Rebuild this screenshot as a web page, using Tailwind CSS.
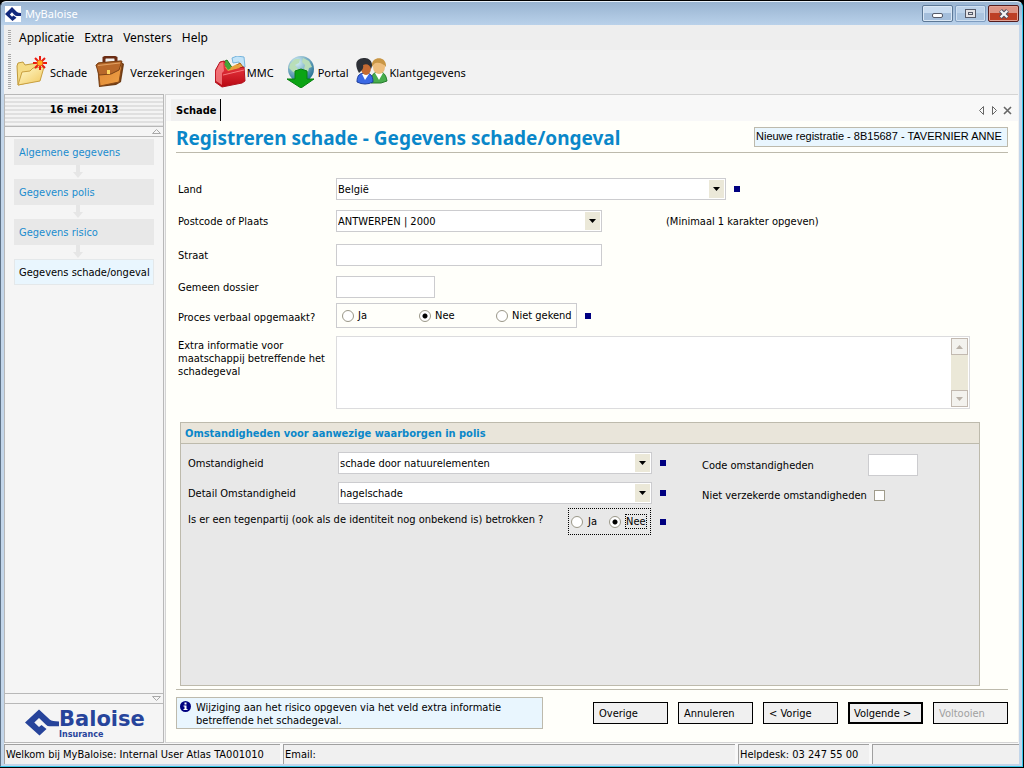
<!DOCTYPE html>
<html lang="nl">
<head>
<meta charset="utf-8">
<title>MyBaloise</title>
<script src="https://cdn.jsdelivr.net/npm/@tailwindcss/browser@4"></script>
</head>
<body class="flex h-screen min-h-[768px] flex-col bg-black pt-px pr-px pb-px font-['DejaVu_Sans_Condensed','DejaVu_Sans',sans-serif] text-[11px] leading-[13px] text-black">
<div class="flex min-h-0 flex-1 flex-col rounded-t-md border border-[#35c6ea] border-t-[#e8f1fa] border-l-[#5f7286] bg-[#c3d6ea] px-[3px] pb-[2px]">

  <header class="-mx-[3px] flex h-[23px] shrink-0 items-center rounded-t-md bg-linear-to-b from-[#99b4d1] to-[#b9d1ea] pr-[3px] pl-1">
    <svg class="size-4 bg-white" viewBox="0 0 16 16" aria-hidden="true"><path d="M0 8 7 1l5 5q1 1 4 1v3h-4q-1.500 0-3-1.500L7 6.300 4.800 8.500 7 10.700l1.500-1.200 3 2.200L7.500 15z" fill="#12287c"/></svg>
    <h1 class="ml-1 flex-1 font-['Noto_Sans',sans-serif] text-[11px] leading-4 text-white">MyBaloise</h1>
    <div class="flex gap-[2px]">
      <button aria-label="Minimaliseren" class="flex h-[17px] w-[31px] items-center justify-center rounded-xs border border-[#5c7896] bg-linear-to-b from-[#c9dcf0] from-50% to-[#a4bedb] to-50% shadow-[inset_0_0_0_1px_#dbe8f5]"><span class="mt-1 h-[5px] w-[11px] rounded-xs border border-[#555a68] bg-white"></span></button>
      <button aria-label="Verkleinen" class="flex h-[17px] w-[31px] items-center justify-center rounded-xs border border-[#7e9cbf] bg-linear-to-b from-[#bdd3ea] from-50% to-[#abc5e0] to-50% shadow-[inset_0_0_0_1px_#cfe0f1]"><span class="flex h-[9px] w-[11px] items-center justify-center border border-[#555a68] bg-[#e3e3e6]"><span class="h-[3px] w-[5px] border border-[#555a68]"></span></span></button>
      <button aria-label="Sluiten" class="flex h-[17px] w-[31px] items-center justify-center rounded-xs border border-[#551c1c] bg-linear-to-b from-[#dd9384] from-50% to-[#bd3f26] to-50% shadow-[inset_0_0_0_1px_#e3a294]"><svg class="h-[10px] w-3" viewBox="0 0 12 10" aria-hidden="true"><path d="M2.500 1.500 9.500 8.500M9.500 1.500 2.500 8.500" stroke="#4b4f61" stroke-width="4.200"/><path d="M2.700 1.700 9.300 8.300M9.300 1.700 2.700 8.300" stroke="#f4f4f6" stroke-width="2.200"/></svg></button>
    </div>
  </header>

  <div class="flex min-h-0 flex-1 flex-col bg-[#f2f2f2]">
    <nav class="flex h-[25px] shrink-0 items-center gap-[10px] bg-[#eeeeee] pt-px pl-1 font-['Noto_Sans',sans-serif] text-xs">
      <span class="-mr-[2px] h-4 w-[3px] bg-[repeating-linear-gradient(to_bottom,#a8a8a8_0_1px,#f4f4f4_1px_2px)]"></span>
      <button>Applicatie</button><button>Extra</button><button>Vensters</button><button>Help</button>
    </nav>

    <div class="flex h-[44px] shrink-0 items-center pl-1 font-['Noto_Sans',sans-serif] text-[11px]">
      <span class="mr-[5px] h-9 w-[3px] bg-[repeating-linear-gradient(to_bottom,#a8a8a8_0_1px,#f4f4f4_1px_2px)]"></span>
      <button class="flex items-center gap-[2px]">
        <svg class="size-8" viewBox="0 0 32 32" aria-hidden="true">
          <defs><linearGradient id="fold" x2="1" y2="1"><stop stop-color="#fffbd0"/><stop offset="1" stop-color="#f1c75c"/></linearGradient></defs>
          <path d="M2 29 1 10l1-3 5-1 2 3 12-2 3 2v15z" fill="#f5dc86" stroke="#c09a3c" stroke-linejoin="round"/>
          <path d="M2 29 6 16l8-1 3-3 11-1-4 14z" fill="url(#fold)" stroke="#c9a040" stroke-linejoin="round"/>
          <path d="M24 0v14M17 7h14M19 2l10 10M29 2 19 12" stroke="#ea1c10" stroke-width="2"/><circle cx="24" cy="7" r="3" fill="#ffad1f" stroke="#f0591a"/>
        </svg>Schade</button>
      <button class="ml-2 flex items-center gap-[3px]">
        <svg class="size-8" viewBox="0 0 32 32" aria-hidden="true">
          <defs><linearGradient id="case" x2="1" y2="1"><stop stop-color="#d98433"/><stop offset="1" stop-color="#f0a045"/></linearGradient></defs>
          <path d="M9 7V2l2-1h8l2 1v4" fill="none" stroke="#6b2c14" stroke-width="3"/>
          <path d="M2 8 25 5l4 3-3 18-5 3-17 2z" fill="#6e3c14"/>
          <path d="M3 11 1 10 3 7l23-2 1 3-3 18-19 4z" fill="url(#case)" stroke="#8a4a18"/>
          <path d="M1 9 4 7l23-2-3 9-8 4-12 1z" fill="#b8682a" stroke="#7d4317"/><rect x="12" y="14" width="3" height="4" fill="#ffd45e"/><path d="M3 9.500 25 7" stroke="#e3a263"/>
        </svg>Verzekeringen</button>
      <button class="ml-[10px] flex items-center">
        <svg class="size-8" viewBox="0 0 32 32" aria-hidden="true">
          <defs><linearGradient id="box" x2="0" y2="1"><stop stop-color="#f2404a"/><stop offset="1" stop-color="#b80812"/></linearGradient></defs>
          <path d="M17 2 22 0l7 1 1 10h-5l-1-5-6 1z" fill="#c3e4f8" stroke="#76b4dc"/>
          <path d="M8 6 12 4l6 9-4 4z" fill="#4bb03a" stroke="#1b7420"/><path d="m14 14 11-7 3 4-7 7z" fill="#eda345" stroke="#a46412"/>
          <path d="M0 15 5 6l4-1 5 9 15-3 1 14-3 2-20 4-7-5z" fill="url(#box)" stroke="#b01420" stroke-linejoin="round"/>
          <path d="M1 15 5 7l3-1 1 9-2 2v12l-6-4z" fill="#f8898c" opacity=".75"/><path d="M8 19 29 14" stroke="#f77b7e"/>
          <path d="m10 11 3 4 12-3-3-4-6 3z" fill="#e8a03c"/><path d="m9 8 3-2 4 6-3 2z" fill="#44a536"/>
        </svg>MMC</button>
      <button class="ml-3 flex items-center">
        <svg class="size-8" viewBox="0 0 32 32" aria-hidden="true">
          <defs><radialGradient id="globe" cx=".35" cy=".25" r=".8"><stop stop-color="#d8f1f8"/><stop offset="1" stop-color="#1f6d92"/></radialGradient></defs>
          <circle cx="15" cy="13" r="13" fill="url(#globe)"/><path d="M4 8 9 3l5 0-1 4-4 2 3 4-2 4-3-1-4-4zM17 2l6 3 3 6-3 1-1 4-4-3 1-4-3-3z" fill="#b9deb8"/>
          <path d="m9 15 6-2 6 2v8h7L15 32 1 23h8z" fill="#0ba414" stroke="#07800e"/>
        </svg>Portal</button>
      <button class="ml-[7px] flex items-center gap-[2px]">
        <svg class="size-8" viewBox="0 0 32 32" aria-hidden="true">
          <path d="M15 25c0-6 3-9 8-9s7 3 8 9l-6 2H15z" fill="#48ad4d" stroke="#257a2b"/><path d="m19 17 4 7 4-7z" fill="#fff"/>
          <ellipse cx="23" cy="11" rx="6" ry="7" fill="#eebd7c"/><path d="M16 11c-2-11 15-12 14 0-2-3-7-5-10-4-2 0-2 2-4 4z" fill="#c99645"/>
          <path d="M1 26c0-7 3-9 8-9s8 2 8 9q-8 4-16 0z" fill="#3a68e4" stroke="#1d3f9d"/><path d="m6 18 3 6 4-6z" fill="#fff"/>
          <ellipse cx="10" cy="12" rx="5" ry="7" fill="#c56a32"/><path d="M3 17C-4 4 4 2 9 2s9 5 6 11c-1-4-4-6-8-4 1 3-1 6-4 8z" fill="#2d3036"/>
        </svg>Klantgegevens</button>
    </div>

    <div class="flex min-h-0 flex-1 gap-px pr-px">
      <aside class="flex w-[160px] shrink-0 flex-col border border-[#b8b8b8] bg-[#f5f5f5]">
        <h2 class="flex h-[31px] items-center justify-center bg-[repeating-linear-gradient(to_bottom,#f4f4f4_0_2px,#e0e0e0_2px_4px)] pb-[2px] font-bold">16 mei 2013</h2>
        <button aria-label="Omhoog" class="flex h-[11px] items-center justify-end border-y border-[#b8b8b8] pr-[2px]"><svg class="h-[5px] w-[9px]" viewBox="0 0 9 5" aria-hidden="true"><path d="M.500 4.500h8L4.500.500z" fill="none" stroke="#a8a8a8"/></svg></button>
        <nav class="flex flex-1 flex-col items-center pt-[2px] text-[#1a8ccf]">
          <a href="#" class="flex h-[26px] w-[140px] items-center bg-[#e8e8e8] px-[5px]">Algemene gegevens</a>
          <svg class="-ml-3 h-[14px] w-[10px] shrink-0" viewBox="0 0 10 14" aria-hidden="true"><path d="M3 0h4v7h3l-5 6-5-6h3z" fill="#e6e6e6"/></svg>
          <a href="#" class="flex h-[26px] w-[140px] items-center bg-[#e8e8e8] px-[5px]">Gegevens polis</a>
          <svg class="-ml-3 h-[14px] w-[10px] shrink-0" viewBox="0 0 10 14" aria-hidden="true"><path d="M3 0h4v7h3l-5 6-5-6h3z" fill="#e6e6e6"/></svg>
          <a href="#" class="flex h-[26px] w-[140px] items-center bg-[#e8e8e8] px-[5px]">Gegevens risico</a>
          <svg class="-ml-3 h-[14px] w-[10px] shrink-0" viewBox="0 0 10 14" aria-hidden="true"><path d="M3 0h4v7h3l-5 6-5-6h3z" fill="#e6e6e6"/></svg>
          <a href="#" class="flex h-[26px] w-[140px] items-center border border-[#e4e8ea] bg-[#e9f6fe] px-1 whitespace-nowrap text-black">Gegevens schade/ongeval</a>
        </nav>
        <button aria-label="Omlaag" class="flex h-[11px] items-center justify-end border-y border-[#b8b8b8] pr-[2px]"><svg class="h-[5px] w-[9px]" viewBox="0 0 9 5" aria-hidden="true"><path d="M.500.500h8l-4 4z" fill="none" stroke="#a8a8a8"/></svg></button>
        <div class="flex h-[38px] items-center pl-5 text-[#27449b]">
          <svg class="h-7 w-[34px] shrink-0" viewBox="0 0 34 28" aria-hidden="true"><path d="M0 13.500 14 .500 25 10.800q2 1.700 9 1.700v4.700h-9.500q-2 0-3.500-1.500l-7-6.700-4.700 4.500 4.700 4.500 2.500-2 5 4-7 6.500z" fill="currentColor"/></svg>
          <div class="flex flex-col font-['DejaVu_Sans',sans-serif] font-bold"><span class="text-[21px] leading-[22px]">Baloise</span><span class="text-[8px] leading-[9px]">Insurance</span></div>
        </div>
      </aside>

      <main class="flex min-w-0 flex-1 flex-col border border-r-0 border-[#d4d4d4] bg-[#fffffa]">
        <div class="flex h-[26px] shrink-0 items-end bg-[#f8f8f8] pr-[6px] pl-[5px]">
          <div role="tab" aria-selected="true" class="flex h-[22px] w-[50px] shrink-0 items-center border-r border-black bg-[#f0f0f0] pl-[5px] font-bold">Schade</div>
          <div class="ml-auto flex h-[22px] items-center gap-1">
            <button aria-label="Vorig tabblad"><svg class="size-[9px]" viewBox="0 0 9 9" aria-hidden="true"><path d="M6.500.500v8l-4-4z" fill="none" stroke="#666"/></svg></button>
            <button aria-label="Volgend tabblad"><svg class="size-[9px]" viewBox="0 0 9 9" aria-hidden="true"><path d="M2.500.500v8l4-4z" fill="none" stroke="#666"/></svg></button>
            <button aria-label="Tabblad sluiten"><svg class="size-[9px]" viewBox="0 0 9 9" aria-hidden="true"><path d="m1 1 7 7M8 1 1 8" stroke="#666" stroke-width="1.600"/></svg></button>
          </div>
        </div>

        <form class="flex min-h-0 flex-1 flex-col px-[10px]" onsubmit="return false">
          <div class="flex h-8 shrink-0 items-center justify-between border-b border-[#bdbaac]">
            <h2 class="pt-[3px] font-['Noto_Sans',sans-serif] text-[19px] leading-6 font-bold text-[#0a87c9]">Registreren schade - Gegevens schade/ongeval</h2>
            <div class="flex h-5 w-[254px] items-center border border-[#bdbaac] bg-[#e9f6fe] pl-px font-['Liberation_Sans',sans-serif] text-[11px] whitespace-nowrap">Nieuwe registratie - 8B15687 - TAVERNIER ANNE</div>
          </div>

          <div class="grid shrink-0 grid-cols-[158px_1fr] pt-[25px] pl-[2px]">
            <label for="land" class="pt-[5px]">Land</label>
            <div class="mb-[10px] flex items-center gap-2">
              <div class="relative w-[390px]"><select id="land" class="block h-[22px] w-full appearance-none border border-[#cccccf] bg-white pl-px"><option>België</option></select><span class="pointer-events-none absolute top-[2px] right-[2px] flex h-[18px] w-[15px] items-center justify-center bg-[#ebe8d8]"><svg class="h-1 w-[7px]" viewBox="0 0 7 4" aria-hidden="true"><path d="M0 0h7L3.500 4z"/></svg></span></div>
              <span class="size-[6px] bg-[#000080]"></span>
            </div>
            <label for="plaats" class="pt-[5px]">Postcode of Plaats</label>
            <div class="mb-3 flex items-center">
              <div class="relative w-[266px]"><select id="plaats" class="block h-[22px] w-full appearance-none border border-[#cccccf] bg-white pl-px"><option>ANTWERPEN | 2000</option></select><span class="pointer-events-none absolute top-[2px] right-[2px] flex h-[18px] w-[15px] items-center justify-center bg-[#ebe8d8]"><svg class="h-1 w-[7px]" viewBox="0 0 7 4" aria-hidden="true"><path d="M0 0h7L3.500 4z"/></svg></span></div>
              <span class="ml-16">(Minimaal 1 karakter opgeven)</span>
            </div>
            <label for="straat" class="pt-[5px]">Straat</label>
            <div class="mb-[10px]"><input id="straat" type="text" class="block h-[22px] w-[266px] border border-[#cccccf] bg-white px-px"></div>
            <label for="dossier" class="pt-[5px]">Gemeen dossier</label>
            <div class="mb-[5px]"><input id="dossier" type="text" class="block h-[22px] w-[99px] border border-[#cccccf] bg-white px-px"></div>
            <span id="pv" class="pt-2">Proces verbaal opgemaakt?</span>
            <div class="mb-2 flex items-center gap-2">
              <div role="radiogroup" aria-labelledby="pv" class="flex h-[25px] w-[241px] items-center border border-[#cccccf] pl-[5px]">
                <label class="flex w-[77px] items-center gap-1"><input type="radio" name="pv" class="size-3 appearance-none rounded-full border border-[#9a9788] bg-white checked:bg-[radial-gradient(circle,#000_0_2px,#fff_3px)]">Ja</label>
                <label class="flex w-[77px] items-center gap-1"><input type="radio" name="pv" checked class="size-3 appearance-none rounded-full border border-[#9a9788] bg-white checked:bg-[radial-gradient(circle,#000_0_2px,#fff_3px)]">Nee</label>
                <label class="flex items-center gap-1 whitespace-nowrap"><input type="radio" name="pv" class="size-3 appearance-none rounded-full border border-[#9a9788] bg-white checked:bg-[radial-gradient(circle,#000_0_2px,#fff_3px)]">Niet gekend</label>
              </div>
              <span class="size-[6px] bg-[#000080]"></span>
            </div>
            <label for="extra" class="pt-[3px]">Extra informatie voor<br>maatschappij betreffende het schadegeval</label>
            <div class="mr-[38px] flex h-[73px] border border-[#dcdcde] bg-white p-px">
              <textarea id="extra" class="block min-w-0 flex-1 resize-none outline-none"></textarea>
              <div class="flex w-[17px] flex-col justify-between bg-[#ebe8d8]">
                <button type="button" aria-label="Omhoog schuiven" class="flex h-[17px] items-center justify-center border border-[#c2b9b0] bg-[#f3f2ee]"><svg class="h-1 w-[7px]" viewBox="0 0 7 4" aria-hidden="true"><path d="M0 4h7L3.500 0z" fill="#b9b1a8"/></svg></button>
                <button type="button" aria-label="Omlaag schuiven" class="flex h-[17px] items-center justify-center border border-[#c2b9b0] bg-[#f3f2ee]"><svg class="h-1 w-[7px]" viewBox="0 0 7 4" aria-hidden="true"><path d="M0 0h7L3.500 4z" fill="#b9b1a8"/></svg></button>
              </div>
            </div>
          </div>

          <section class="mt-[13px] mr-7 ml-1 flex min-h-[150px] flex-1 flex-col border border-[#bdbaac] bg-[#e8e8e8]">
            <h3 class="flex h-[21px] items-center border-b border-[#bdbaac] bg-[#e9e5da] pt-px pl-1 font-bold text-[#0a87c9]">Omstandigheden voor aanwezige waarborgen in polis</h3>
            <div class="flex pt-2 pl-[7px]">
              <div class="grid w-[514px] shrink-0 grid-cols-[150px_1fr]">
                <label for="omst" class="pt-[5px]">Omstandigheid</label>
                <div class="mb-2 flex items-center gap-2">
                  <div class="relative w-[314px]"><select id="omst" class="block h-[22px] w-full appearance-none border border-[#cccccf] bg-white pl-px"><option>schade door natuurelementen</option></select><span class="pointer-events-none absolute top-[2px] right-[2px] flex h-[18px] w-[15px] items-center justify-center bg-[#ebe8d8]"><svg class="h-1 w-[7px]" viewBox="0 0 7 4" aria-hidden="true"><path d="M0 0h7L3.500 4z"/></svg></span></div>
                  <span class="size-[6px] bg-[#000080]"></span>
                </div>
                <label for="detail" class="pt-[5px]">Detail Omstandigheid</label>
                <div class="mb-1 flex items-center gap-2">
                  <div class="relative w-[314px]"><select id="detail" class="block h-[22px] w-full appearance-none border border-[#cccccf] bg-white pl-px"><option>hagelschade</option></select><span class="pointer-events-none absolute top-[2px] right-[2px] flex h-[18px] w-[15px] items-center justify-center bg-[#ebe8d8]"><svg class="h-1 w-[7px]" viewBox="0 0 7 4" aria-hidden="true"><path d="M0 0h7L3.500 4z"/></svg></span></div>
                  <span class="size-[6px] bg-[#000080]"></span>
                </div>
                <div class="col-span-2 flex items-center">
                  <span id="tegen" class="w-[380px] self-start pt-[5px]">Is er een tegenpartij (ook als de identiteit nog onbekend is) betrokken ?</span>
                  <div role="radiogroup" aria-labelledby="tegen" class="flex h-[27px] w-[83px] items-center gap-3 border border-dotted border-black pl-[2px]">
                    <label class="flex items-center gap-[5px]"><input type="radio" name="tegen" class="size-3 appearance-none rounded-full border border-[#9a9788] bg-white checked:bg-[radial-gradient(circle,#000_0_2px,#fff_3px)]">Ja</label>
                    <label class="flex items-center gap-[5px]"><input type="radio" name="tegen" checked class="size-3 appearance-none rounded-full border border-[#9a9788] bg-white checked:bg-[radial-gradient(circle,#000_0_2px,#fff_3px)]"><span class="outline outline-dotted outline-black">Nee</span></label>
                  </div>
                  <span class="ml-[9px] size-[6px] bg-[#000080]"></span>
                </div>
              </div>
              <div class="grid grid-cols-[auto_1fr] content-start gap-x-px pt-[2px]">
                <label for="code" class="flex h-[22px] items-center">Code omstandigheden</label>
                <input id="code" type="text" class="h-[22px] w-[50px] border border-[#cccccf] bg-white px-px">
                <label for="nietverz" class="flex h-[38px] items-center whitespace-nowrap">Niet verzekerde omstandigheden</label>
                <input id="nietverz" type="checkbox" class="ml-[6px] size-[11px] appearance-none self-center border border-[#a09c8c] bg-white">
              </div>
            </div>
          </section>

          <div class="mt-[3px] flex shrink-0 items-start justify-between border-t border-[#bdbaac] pt-[7px] pb-[13px]">
            <div class="flex h-8 w-[367px] gap-[5px] border border-[#bdbaac] bg-[#e9f6fe] pt-[3px] pl-[3px]">
              <svg class="size-[11px] shrink-0" viewBox="0 0 11 11" aria-hidden="true"><circle cx="5.500" cy="5.500" r="5.500" fill="#000080"/><path d="M4.500 1.500h2v2h-2zM3.500 4.500h3v3.500h1v1h-4v-1h1V5.500h-1z" fill="#fff"/></svg>
              <p>Wijziging aan het risico opgeven via het veld extra informatie<br>betreffende het schadegeval.</p>
            </div>
            <div class="flex gap-[10px] pt-[5px]">
              <button type="button" class="h-[22px] w-[75px] border border-black bg-[#f0f0f0] pl-[5px] text-left">Overige</button>
              <button type="button" class="h-[22px] w-[75px] border border-black bg-[#f0f0f0] pl-[5px] text-left">Annuleren</button>
              <button type="button" class="h-[22px] w-[75px] border border-black bg-[#f0f0f0] pl-[5px] text-left">&lt; Vorige</button>
              <button type="submit" class="h-[22px] w-[75px] border-2 border-black bg-[#f0f0f0] pl-1 text-left">Volgende &gt;</button>
              <button type="button" disabled class="h-[22px] w-[75px] border border-black bg-[#f0f0f0] pl-[5px] text-left text-[#a0a0a0]">Voltooien</button>
            </div>
          </div>
        </form>
      </main>
    </div>

    <footer class="flex h-[21px] shrink-0 gap-[3px] bg-[#f8f8f8] pt-px whitespace-nowrap">
      <div class="flex w-[276px] items-center border-t border-l border-[#a0a0a0] bg-[#f0f0f0] pl-px">Welkom bij MyBaloise: Internal User Atlas TA001010</div>
      <div class="flex flex-1 items-center border-t border-l border-[#a0a0a0] bg-[#f0f0f0] pl-px">Email:</div>
      <div class="flex w-[131px] items-center border-t border-l border-[#a0a0a0] bg-[#f0f0f0] pl-px">Helpdesk: 03 247 55 00</div>
      <div class="w-[147px] border-t border-l border-[#a0a0a0] bg-[#f0f0f0]"></div>
    </footer>
  </div>
</div>
</body>
</html>
